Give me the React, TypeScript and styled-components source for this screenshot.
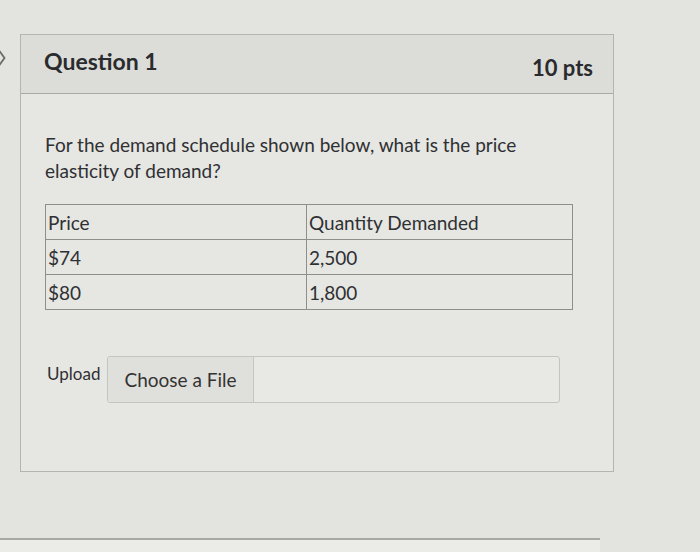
import React from "react";
import styled, { createGlobalStyle } from "styled-components";

const Global = createGlobalStyle`
  html, body { margin: 0; padding: 0; }
  body {
    width: 700px;
    height: 552px;
    overflow: hidden;
    background: #e3e3df;
    font-family: Lato, "Open Sans", "Liberation Sans", sans-serif;
    color: #2f3033;
  }
`;

const Page = styled.div`
  width: 700px;
  height: 552px;
  display: flex;
  flex-direction: column;
  padding-top: 34px;
  box-sizing: border-box;
`;

const Row = styled.div`
  display: flex;
  align-items: flex-start;
`;

const Gutter = styled.div`
  width: 20px;
  padding-top: 14px;
  display: flex;
`;

const Card = styled.div`
  width: 594px;
  height: 438px;
  box-sizing: border-box;
  border: 1px solid #b4b4b0;
  background: #e6e6e2;
  display: flex;
  flex-direction: column;
`;

const Header = styled.div`
  height: 58px;
  background: #dcdcd8;
  border-bottom: 1px solid #a9a9a5;
  display: flex;
  align-items: center;
  justify-content: space-between;
  padding: 0 20px 0 23px;
`;

const Title = styled.h2<{ $offset?: number; $size?: number }>`
  margin: 0;
  font-size: ${(p) => p.$size ?? 22}px;
  font-weight: 700;
  color: #2a2b2e;
  position: relative;
  top: ${(p) => p.$offset ?? 0}px;
`;

const Body = styled.div`
  padding: 38px 24px 0 24px;
`;

const Prompt = styled.p`
  margin: 0;
  font-size: 19px;
  line-height: 26px;
  width: 520px;
`;

const Table = styled.table`
  margin-top: 20px;
  border-collapse: collapse;
  width: 528px;
  font-size: 19px;
`;

const Cell = styled.td<{ $w?: number }>`
  border: 1px solid #8e8e8a;
  height: 34px;
  padding: 0 2px;
  vertical-align: middle;
  width: ${(p) => (p.$w ? `${p.$w}px` : "auto")};
`;

const UploadRow = styled.div`
  margin-top: 46px;
  display: flex;
  align-items: flex-start;
  padding-left: 2px;
`;

const UploadLabel = styled.span`
  font-size: 17px;
  padding-top: 7px;
  width: 60px;
`;

const FileField = styled.div`
  display: flex;
  width: 453px;
  height: 47px;
  border: 1px solid #c4c4c0;
  border-radius: 3px;
  background: #e8e8e4;
  box-sizing: border-box;
`;

const ChooseButton = styled.div`
  width: 146px;
  height: 100%;
  box-sizing: border-box;
  background: #dfdfdb;
  border-right: 1px solid #c4c4c0;
  border-radius: 3px 0 0 3px;
  display: flex;
  align-items: center;
  justify-content: center;
  font-size: 19px;
  color: #333;
`;

const Footer = styled.div`
  margin-top: auto;
  height: 12px;
  border-top: 2px solid #a8a8a4;
  width: 600px;
  background: #ebebe8;
`;

export default function App() {
  return (
    <>
      <Global />
      <Page>
        <Row>
          <Gutter>
            <svg width="8" height="20" viewBox="0 0 8 20" style={{ marginLeft: -2 }}>
              <path d="M0 1 L6.5 10 L0 19" fill="none" stroke="#6a6a68" strokeWidth="1.8" />
            </svg>
          </Gutter>
          <Card>
            <Header>
              <Title $offset={-3} $size={23}>Question 1</Title>
              <Title $offset={3}>10 pts</Title>
            </Header>
            <Body>
              <Prompt>
                For the demand schedule shown below, what is the price elasticity of demand?
              </Prompt>
              <Table>
                <tbody>
                  <tr>
                    <Cell $w={256}>Price</Cell>
                    <Cell>Quantity Demanded</Cell>
                  </tr>
                  <tr>
                    <Cell $w={256}>$74</Cell>
                    <Cell>2,500</Cell>
                  </tr>
                  <tr>
                    <Cell $w={256}>$80</Cell>
                    <Cell>1,800</Cell>
                  </tr>
                </tbody>
              </Table>
              <UploadRow>
                <UploadLabel>Upload</UploadLabel>
                <FileField>
                  <ChooseButton>Choose a File</ChooseButton>
                </FileField>
              </UploadRow>
            </Body>
          </Card>
        </Row>
        <Footer />
      </Page>
    </>
  );
}
